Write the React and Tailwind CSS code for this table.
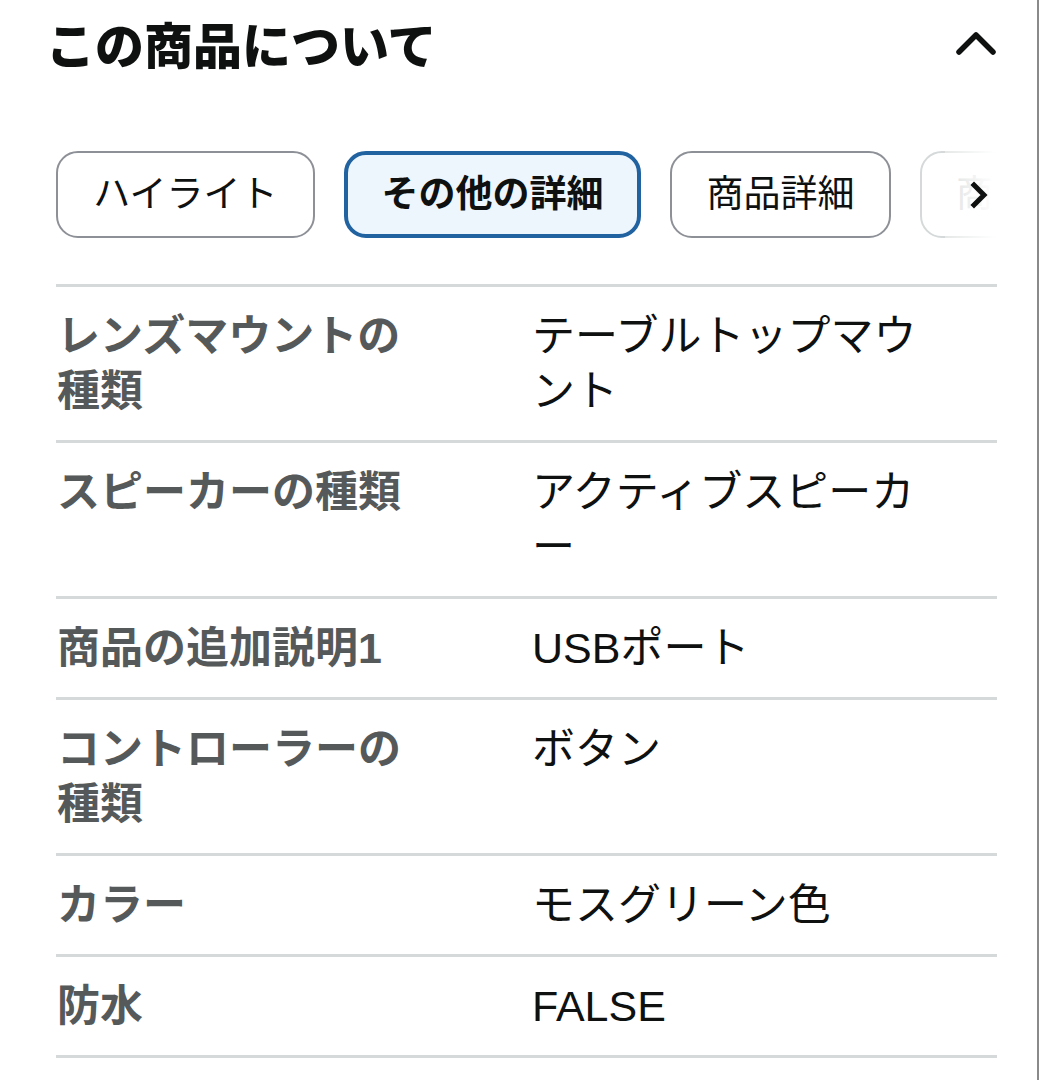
import React from "react";

const rows = [
  ["レンズマウントの種類", "テーブルトップマウント"],
  ["スピーカーの種類", "アクティブスピーカー"],
  ["商品の追加説明1", "USBポート"],
  ["コントローラーの種類", "ボタン"],
  ["カラー", "モスグリーン色"],
  ["防水", "FALSE"],
];

export default function App() {
  return (
    <div
      className="w-[1039px] h-[1080px] bg-white overflow-hidden border-r-2 border-[#8a8a8a] text-[#0f1111]"
      style={{ fontFamily: '"Liberation Sans", "Noto Sans CJK JP", sans-serif' }}
    >
      <div className="flex items-center justify-between pl-[46px] pr-[40px] pt-[20px]">
        <h2 className="text-[49px] leading-[54px] font-black tracking-[0px] text-[#0f1111]">
          この商品について
        </h2>
        <svg width="42" height="30" viewBox="0 0 42 30" className="mt-[-10px]">
          <path d="M4 25 L21 8 L38 25" fill="none" stroke="#0f1111" strokeWidth="5.5" strokeLinecap="round" strokeLinejoin="round" />
        </svg>
      </div>

      <div className="relative mt-[77px] ml-[56px] w-[939px] h-[87px] overflow-hidden">
        <div className="flex gap-[29px] h-full">
          <div className="shrink-0 w-[259px] h-full rounded-[22px] border-2 border-[#8d9096] flex items-center justify-center text-[37px] text-[#0f1111]">
            ハイライト
          </div>
          <div className="shrink-0 w-[297px] h-full rounded-[22px] border-[4px] border-[#2162a1] bg-[#edf6fd] flex items-center justify-center text-[37px] font-bold text-[#0f1111]">
            その他の詳細
          </div>
          <div className="shrink-0 w-[221px] h-full rounded-[22px] border-2 border-[#8d9096] flex items-center justify-center text-[37px] text-[#0f1111]">
            商品詳細
          </div>
          <div className="shrink-0 w-[240px] h-full rounded-[22px] border-2 border-[#d5d9d9] flex items-center pl-[34px] text-[37px] text-[#c8cbcb]">
            商
          </div>
        </div>
        <div className="absolute top-0 right-0 h-full w-[50px] bg-gradient-to-r from-white/40 to-white" />
        <svg width="22" height="28" viewBox="0 0 22 28" className="absolute right-[5px] top-[30px]">
          <path d="M6 4 L16 14 L6 24" fill="none" stroke="#0f1111" strokeWidth="5" strokeLinecap="square" strokeLinejoin="miter" />
        </svg>
      </div>

      <div className="mt-[46px] ml-[56px] w-[941px] border-b-[3px] border-[#d5d9d9]">
        {rows.map(([label, value]) => (
          <div key={label} className="grid grid-cols-[476px_1fr] border-t-[3px] border-[#d5d9d9] pt-[22px] pb-[21px]">
            <div className="pl-[1px] pr-[115px] text-[43px] leading-[55px] font-bold text-[#565959]">
              {label}
            </div>
            <div className="pr-[62px] text-[43px] leading-[55px] text-[#0f1111] break-all">
              {value}
            </div>
          </div>
        ))}
      </div>
    </div>
  );
}
